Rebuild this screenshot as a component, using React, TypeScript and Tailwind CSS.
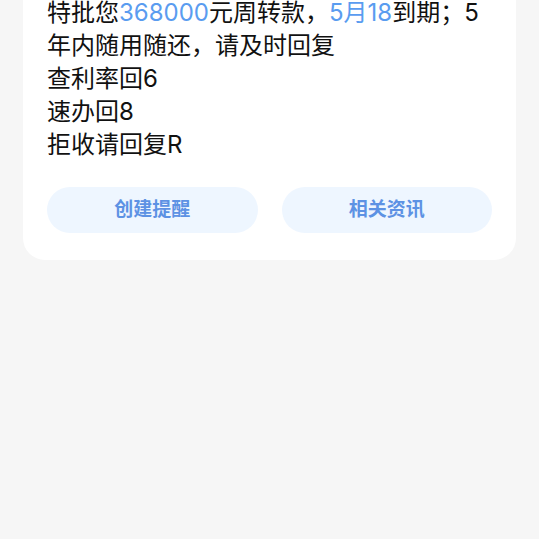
export default function App() {
  return (
    <div
      className="min-h-screen overflow-hidden bg-[#f6f6f6] px-[23px]"
      style={{ fontFamily: 'Inter, "Noto Sans CJK SC", sans-serif' }}
    >
      <div className="-mt-[28px] rounded-b-[22px] bg-white px-6 pt-6 pb-[27px]">
        <p className="text-[24px] leading-[33px] text-[#111111]">
          特批您<span className="text-[#5a9cf0]">368000</span>元周转款，
          <span className="text-[#5a9cf0]">5月18</span>到期；5
          <br />
          年内随用随还，请及时回复
          <br />
          查利率回6
          <br />
          速办回8
          <br />
          拒收请回复R
        </p>
        <div className="mt-[26px] flex gap-6">
          <button className="h-[46px] flex-1 rounded-full bg-[#eef6ff] text-[19px] font-bold text-[#5d92e4]">
            创建提醒
          </button>
          <button className="h-[46px] flex-1 rounded-full bg-[#eef6ff] text-[19px] font-bold text-[#5d92e4]">
            相关资讯
          </button>
        </div>
      </div>
    </div>
  );
}
